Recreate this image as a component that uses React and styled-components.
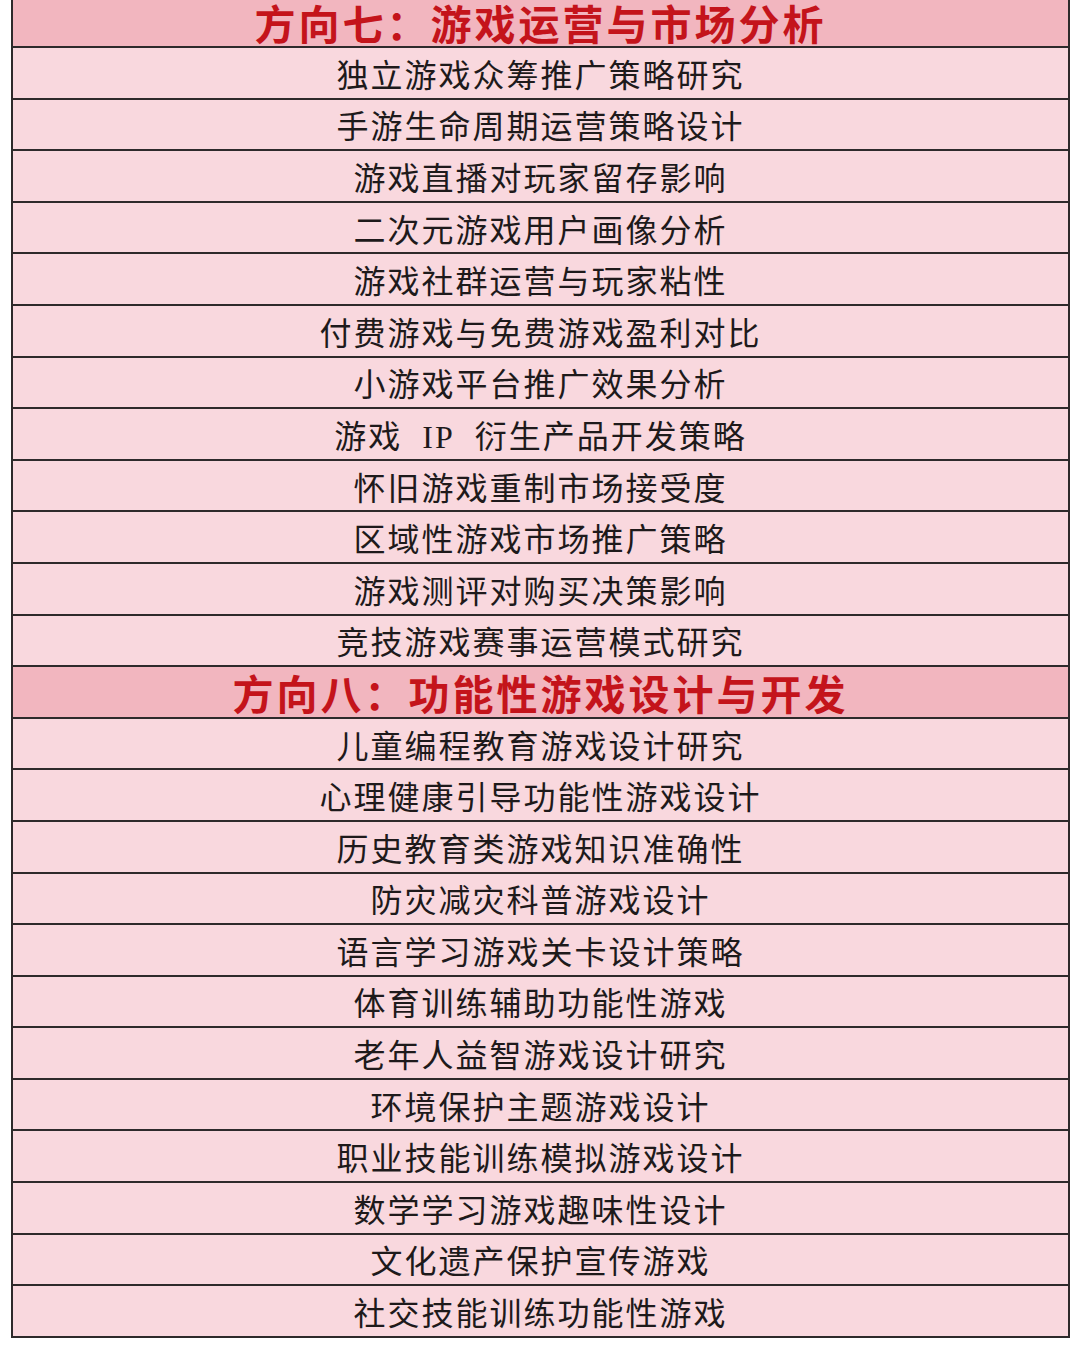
import styled, { createGlobalStyle } from 'styled-components'

const sections = [
  {
    title: '方向七：游戏运营与市场分析',
    items: [
      '独立游戏众筹推广策略研究',
      '手游生命周期运营策略设计',
      '游戏直播对玩家留存影响',
      '二次元游戏用户画像分析',
      '游戏社群运营与玩家粘性',
      '付费游戏与免费游戏盈利对比',
      '小游戏平台推广效果分析',
      '游戏 IP 衍生产品开发策略',
      '怀旧游戏重制市场接受度',
      '区域性游戏市场推广策略',
      '游戏测评对购买决策影响',
      '竞技游戏赛事运营模式研究',
    ],
  },
  {
    title: '方向八：功能性游戏设计与开发',
    items: [
      '儿童编程教育游戏设计研究',
      '心理健康引导功能性游戏设计',
      '历史教育类游戏知识准确性',
      '防灾减灾科普游戏设计',
      '语言学习游戏关卡设计策略',
      '体育训练辅助功能性游戏',
      '老年人益智游戏设计研究',
      '环境保护主题游戏设计',
      '职业技能训练模拟游戏设计',
      '数学学习游戏趣味性设计',
      '文化遗产保护宣传游戏',
      '社交技能训练功能性游戏',
    ],
  },
]

/*---> Component <---*/
export default function App() {
  return (
    <>
      <GlobalStyle />
      <Page>
        <Table>
          {sections.map((section, si) => (
            <Section key={si}>
              <HeaderRow $first={si === 0}>{section.title}</HeaderRow>
              {section.items.map((item, i) => (
                <Row key={i}>{item.replace(/ /g, '\u00a0\u00a0')}</Row>
              ))}
            </Section>
          ))}
        </Table>
      </Page>
    </>
  )
}

/*---> Styles <---*/
const GlobalStyle = createGlobalStyle`
  body {
    margin: 0;
    background: #ffffff;
    font-family: 'Liberation Serif', 'Noto Sans CJK SC', serif;
  }
`

const Page = styled.div`
  width: 1080px;
  height: 1347px;
  padding: 0 11px 0 11px;
  box-sizing: border-box;
`

const Table = styled.div`
  display: flex;
  flex-direction: column;
  border-left: 2px solid #2e2a2b;
  border-right: 2px solid #2e2a2b;
  border-bottom: 2px solid #2e2a2b;
  width: 1059px;
  box-sizing: border-box;
`

const Section = styled.div`
  display: flex;
  flex-direction: column;
`

const HeaderRow = styled.div`
  height: ${(p) => (p.$first ? '46px' : '51.6px')};
  border-top: ${(p) => (p.$first ? 'none' : '2px solid #2e2a2b')};
  box-sizing: border-box;
  background: #f2b6bf;
  color: #c4141b;
  font-family: 'Liberation Serif', 'Noto Sans CJK SC', serif;
  font-size: 41px;
  font-weight: 700;
  letter-spacing: 3px;
  display: flex;
  align-items: center;
  justify-content: center;
  padding-bottom: ${(p) => (p.$first ? '2px' : '0')};
`

const Row = styled.div`
  height: 51.6px;
  border-top: 2px solid #2e2a2b;
  box-sizing: border-box;
  background: #f9d8de;
  color: #1e1a1b;
  font-size: 32px;
  font-weight: 400;
  letter-spacing: 2px;
  display: flex;
  align-items: center;
  justify-content: center;
  white-space: pre;
`
